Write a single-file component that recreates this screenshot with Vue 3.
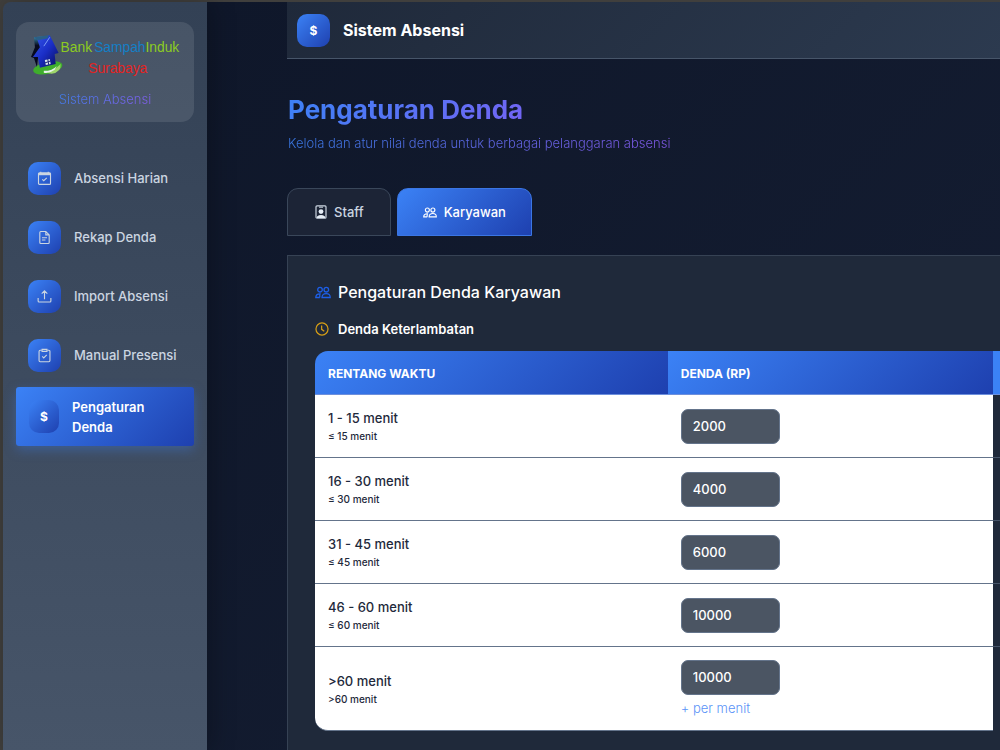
<script setup>
import { ref } from 'vue'

const menu = [
  { label: 'Absensi Harian', icon: 'calendar' },
  { label: 'Rekap Denda', icon: 'file' },
  { label: 'Import Absensi', icon: 'upload' },
  { label: 'Manual Presensi', icon: 'clipboard' },
  { label: 'Pengaturan Denda', icon: 'dollar', active: true }
]

const rows = ref([
  { range: '1 - 15 menit', note: '≤ 15 menit', value: '2000' },
  { range: '16 - 30 menit', note: '≤ 30 menit', value: '4000' },
  { range: '31 - 45 menit', note: '≤ 45 menit', value: '6000' },
  { range: '46 - 60 menit', note: '≤ 60 menit', value: '10000' },
  { range: '>60 menit', note: '>60 menit', value: '10000', extra: '+ per menit' }
])
</script>

<template>
  <div class="page">
    <aside class="sidebar">
      <div class="brand">
        <svg class="logo" viewBox="0 0 152 46" role="img" aria-label="Bank Sampah Induk Surabaya">
          <defs>
            <linearGradient id="wall" x1="0" y1="0" x2="1" y2="1">
              <stop offset="0" stop-color="#3558ee" />
              <stop offset="0.5" stop-color="#1a2ec6" />
              <stop offset="1" stop-color="#080c5c" />
            </linearGradient>
            <linearGradient id="side" x1="0" y1="0" x2="0" y2="1">
              <stop offset="0" stop-color="#3d8fae" />
              <stop offset="0.3" stop-color="#080b20" />
              <stop offset="1" stop-color="#05071d" />
            </linearGradient>
          </defs>
          <ellipse cx="18" cy="33" rx="15" ry="6" fill="#3fae2c" transform="rotate(-12 18 33)" />
          <path d="M17 38Q25 35 31 29Q32 37 22 39Z" fill="#9ed66b" />
          <path d="M14 36Q23 36 27 31L25 35Q20 39 14 38Z" fill="#e8f3ec" />
          <path d="M4 2L14 1L9 16L7 32L4 23L1 22L5 12Z" fill="url(#side)" />
          <path d="M7 3L20 0L29 18L25 19L26 29L10 33L8 22L3 22L10 12Z" fill="url(#wall)" />
          <path d="M4 2L19 0L18 3L8 5Z" fill="#2b5f86" />
          <path d="M20 2L14 11" stroke="#7c9cf5" stroke-width="1" />
          <path d="M15 25L20 24L21 29L16 30Z" fill="#d6e2ee" />
          <path d="M18 24L19 30M15 28L21 26" stroke="#1a2577" stroke-width="1" />
          <g class="logo-text">
            <text x="31" y="17" fill="#8ccb22">Bank</text>
            <text x="65" y="17" fill="#147fc6">Sampah</text>
            <text x="117" y="17" fill="#8ccb22">Induk</text>
            <text x="59" y="38" fill="#e32322">Surabaya</text>
          </g>
        </svg>
        <div class="brand-name"><span class="grad">Sistem Absensi</span></div>
      </div>
      <nav class="menu">
        <a v-for="item in menu" :key="item.label" href="#" class="item" :class="{ active: item.active }">
          <span class="tile">
            <span v-if="item.icon === 'dollar'" class="dollar">$</span>
            <svg v-else viewBox="0 0 16 16" class="glyph" aria-hidden="true">
              <template v-if="item.icon === 'calendar'">
                <rect x="1.6" y="2" width="12.8" height="12.2" rx="1" />
                <path d="M1.6 3.3H14.4" stroke-width="2.4" />
                <path d="M4 .8V3M12 .8V3M5.6 8.9L7.2 10.4L10.4 7.3" />
              </template>
              <template v-else-if="item.icon === 'file'">
                <path d="M9.4 1.6H4Q3 1.6 3 2.6V13.4Q3 14.4 4 14.4H12Q13 14.4 13 13.4V5.2ZM9.4 1.6V5.2H13M5.3 8.2H10.7M5.3 10.6H9" />
              </template>
              <template v-else-if="item.icon === 'upload'">
                <path d="M1.2 9.6V12.8Q1.2 13.8 2.2 13.8H13.8Q14.8 13.8 14.8 12.8V9.6M8 11V2M5 5L8 2L11 5" />
              </template>
              <template v-else>
                <path d="M5 2.4H3.4Q2.2 2.4 2.2 3.6V13.4Q2.2 14.6 3.4 14.6H12.6Q13.8 14.6 13.8 13.4V3.6Q13.8 2.4 12.6 2.4H11" />
                <path d="M5.4 1.4H10.6V3.6H5.4ZM5.6 9L7.2 10.6L10.4 7.4" />
              </template>
            </svg>
          </span>
          <span class="item-label">{{ item.label }}</span>
        </a>
      </nav>
    </aside>

    <div class="main">
      <header class="topbar">
        <span class="tile"><span class="dollar">$</span></span>
        <span class="topbar-title">Sistem Absensi</span>
      </header>

      <main class="content">
        <h1 class="title"><span class="grad">Pengaturan Denda</span></h1>
        <p class="subtitle"><span class="grad">Kelola dan atur nilai denda untuk berbagai pelanggaran absensi</span></p>

        <div class="tabs">
          <button type="button" class="tab">
            <svg viewBox="0 0 12 14" class="badge" aria-hidden="true">
              <rect x="1" y=".8" width="10" height="12.4" rx="1" fill="none" stroke="#cbd5e1" stroke-width="1.2" />
              <path d="M4 2.2H8" stroke="#cbd5e1" stroke-width="1" />
              <circle cx="6" cy="6.6" r="2.4" fill="#e5edf6" />
              <path d="M2 13V11.4Q6 8.6 10 11.4V13Z" fill="#e5edf6" />
            </svg>
            Staff
          </button>
          <button type="button" class="tab current">
            <svg viewBox="0 0 16 12" class="people" aria-hidden="true">
              <circle cx="5" cy="3.2" r="2.3" />
              <circle cx="11.3" cy="3.2" r="2.3" />
              <path d="M7 11H15.2Q15.4 7.2 11.2 7.2Q7 7.2 7 11ZM4.8 11H.8Q.8 7.4 5 7.4Q4.6 8.6 4.8 11" />
            </svg>
            Karyawan
          </button>
        </div>

        <section class="card">
          <h2 class="card-title">
            <svg viewBox="0 0 16 12" class="people" aria-hidden="true">
              <circle cx="5" cy="3.2" r="2.3" />
              <circle cx="11.3" cy="3.2" r="2.3" />
              <path d="M7 11H15.2Q15.4 7.2 11.2 7.2Q7 7.2 7 11ZM4.8 11H.8Q.8 7.4 5 7.4Q4.6 8.6 4.8 11" />
            </svg>
            Pengaturan Denda Karyawan
          </h2>
          <h3 class="card-sub">
            <svg viewBox="0 0 16 16" class="clock" aria-hidden="true">
              <circle cx="8" cy="8" r="6.9" />
              <path d="M7.6 4V8.4L10.6 10.6" />
            </svg>
            Denda Keterlambatan
          </h3>
          <table class="fines">
            <thead>
              <tr>
                <th scope="col" class="col-range">Rentang Waktu</th>
                <th scope="col" class="col-value">Denda (Rp)</th>
                <td class="head-rest"></td>
              </tr>
            </thead>
            <tbody>
              <tr v-for="(row, i) in rows" :key="i">
                <td class="cell">
                  <label :for="'denda-' + i" class="range">{{ row.range }}</label>
                  <small class="note">{{ row.note }}</small>
                </td>
                <td class="cell">
                  <input :id="'denda-' + i" v-model="row.value" type="text" inputmode="numeric" class="amount" />
                  <div v-if="row.extra" class="extra">{{ row.extra }}</div>
                </td>
                <td class="rest"></td>
              </tr>
            </tbody>
          </table>
        </section>
      </main>
    </div>
  </div>
</template>

<style>
body {
  background: #403f3d;
}
</style>

<style scoped>
* {
  box-sizing: border-box;
}

.page {
  display: flex;
  min-height: 100vh;
  padding: 2px 0 0 3px;
  overflow: hidden;
  font-family: Inter, "Liberation Sans", sans-serif;
  color: #fff;
}

.sidebar {
  position: relative;
  flex: 0 0 204px;
  padding: 20px 13px;
  border-top-left-radius: 8px;
  background: linear-gradient(180deg, #334155, #475569);
  box-shadow: 4px 0 24px rgba(0, 0, 0, 0.25);
}

.brand {
  height: 100px;
  padding: 13px 14px;
  border-radius: 13px;
  background: rgba(255, 255, 255, 0.1);
  text-align: center;
}

.logo {
  display: block;
  width: 100%;
  height: 46px;
}

.logo-text {
  font-family: "Liberation Sans", sans-serif;
  font-size: 14px;
}

.brand-name {
  margin-top: 8px;
  font-size: 13px;
  font-weight: 300;
  line-height: 20px;
}

.grad {
  display: inline-block;
  background: linear-gradient(135deg, #3b82f6, #8b5cf6);
  background-clip: text;
  -webkit-background-clip: text;
  color: transparent;
}

.title .grad {
  background-image: linear-gradient(135deg, #3b82f6, #7464f4);
}

.brand-name .grad,
.subtitle .grad {
  opacity: 0.9;
}

.menu {
  display: flex;
  flex-direction: column;
  gap: 5px;
  margin-top: 29px;
}

.item {
  display: flex;
  align-items: center;
  gap: 13px;
  min-height: 54px;
  padding: 10px 12px;
  border-radius: 3px;
  color: #cbd5e1;
  font-size: 13px;
  font-weight: 500;
  line-height: 20px;
  text-decoration: none;
}

.item.active {
  min-height: 59px;
  padding: 9px 40px 9px 13px;
  background: linear-gradient(135deg, #3b82f6, #1e40af);
  box-shadow: 0 4px 12px rgba(59, 130, 246, 0.35);
  color: #fff;
  font-weight: 600;
}

.tile {
  display: flex;
  flex: 0 0 33px;
  align-items: center;
  justify-content: center;
  height: 33px;
  border-radius: 10px;
  background: linear-gradient(135deg, #3b82f6, #1e40af);
}

.active .tile {
  flex-basis: 30px;
}

.dollar {
  font-size: 12px;
  font-weight: 700;
}

.glyph {
  width: 15px;
  height: 15px;
  fill: none;
  stroke: #cbd5e1;
  stroke-width: 1.2;
}

.main {
  flex: 1;
  min-width: 0;
  padding-left: 80px;
  background: linear-gradient(135deg, #0f172a, #151e33);
}

.topbar {
  display: flex;
  align-items: center;
  gap: 13px;
  height: 57px;
  padding: 0 10px;
  border-bottom: 1px solid #475569;
  background: linear-gradient(135deg, #1f293a, #2c3a4f);
}

.topbar-title {
  font-size: 16px;
  font-weight: 700;
}

.content {
  padding-top: 34px;
}

.title {
  margin: 0;
  padding-left: 1px;
  font-size: 26px;
  font-weight: 700;
  line-height: 34px;
}

.subtitle {
  margin: 6px 0 0;
  padding-left: 1px;
  font-size: 13px;
  font-weight: 300;
  line-height: 20px;
}

.tabs {
  display: flex;
  gap: 6px;
  margin-top: 35px;
}

.tab {
  display: flex;
  align-items: center;
  gap: 7px;
  height: 48px;
  padding: 0 26px 0 27px;
  border: 1px solid #3a475a;
  border-radius: 11px 11px 0 0;
  background: #1c2436;
  color: #cbd5e1;
  font: 500 13px Inter, "Liberation Sans", sans-serif;
}

.tab.current {
  padding: 0 25px;
  border-color: #3b76e4;
  background: linear-gradient(135deg, #3b82f6, #1e40af);
  color: #fff;
}

.badge {
  width: 12px;
  height: 14px;
}

.people {
  width: 14px;
  height: 11px;
  fill: none;
  stroke: currentColor;
  stroke-width: 1.3;
}

.card {
  margin-top: 19px;
  padding: 25px 0 20px 27px;
  border: solid #364254;
  border-width: 1px 0 0 1px;
  background: #1f293a;
}

.card-title,
.card-sub {
  display: flex;
  align-items: center;
  gap: 7px;
  margin: 0;
}

.card-title {
  font-size: 16px;
  font-weight: 500;
  line-height: 22px;
}

.card-title .people {
  width: 16px;
  height: 13px;
  stroke: #1d5fe8;
}

.card-sub {
  margin-top: 17px;
  font-size: 13px;
  font-weight: 600;
  line-height: 18px;
}

.clock {
  width: 14px;
  height: 14px;
  margin-right: 2px;
  fill: none;
  stroke: #d69e16;
  stroke-width: 1.4;
}

.fines {
  width: 100%;
  margin-top: 13px;
  border-spacing: 0;
  table-layout: fixed;
}

.fines th {
  height: 44px;
  padding: 1px 13px 0;
  border-bottom: 1px solid #6d8fdc;
  background: linear-gradient(135deg, #3b82f6, #1e40af);
  font-size: 12px;
  font-weight: 700;
  text-align: left;
  text-transform: uppercase;
}

.col-range {
  width: 51.5%;
  border-top-left-radius: 13px;
}

.col-value {
  width: 47.5%;
}

.head-rest {
  padding: 0;
  border-bottom: 1px solid #6d8fdc;
  background: #3b82f6;
}

.cell {
  height: 63px;
  padding: 0 13px;
  border-bottom: 1px solid #64748b;
  background: #fff;
  color: #1e293b;
}

tr:last-child .cell {
  height: 84px;
}

tr:last-child .cell:first-child {
  border-bottom-left-radius: 13px;
}

.rest {
  padding: 0;
  border-bottom: 1px solid #475569;
}

tr:last-child .rest {
  border-bottom: 0;
}

.range {
  display: block;
  font-size: 13px;
  font-weight: 500;
  line-height: 20px;
}

.note {
  display: block;
  font-size: 10px;
  font-weight: 500;
  line-height: 16px;
}

.amount {
  display: block;
  width: 99px;
  height: 35px;
  padding: 0 11px;
  border: 1px solid #64748b;
  border-radius: 7px;
  background: #4b5563;
  color: #fff;
  font: 500 13px Inter, "Liberation Sans", sans-serif;
}

.extra {
  margin-top: 3px;
  color: #5b93f7;
  font-size: 13px;
  font-weight: 300;
  line-height: 20px;
}
</style>
